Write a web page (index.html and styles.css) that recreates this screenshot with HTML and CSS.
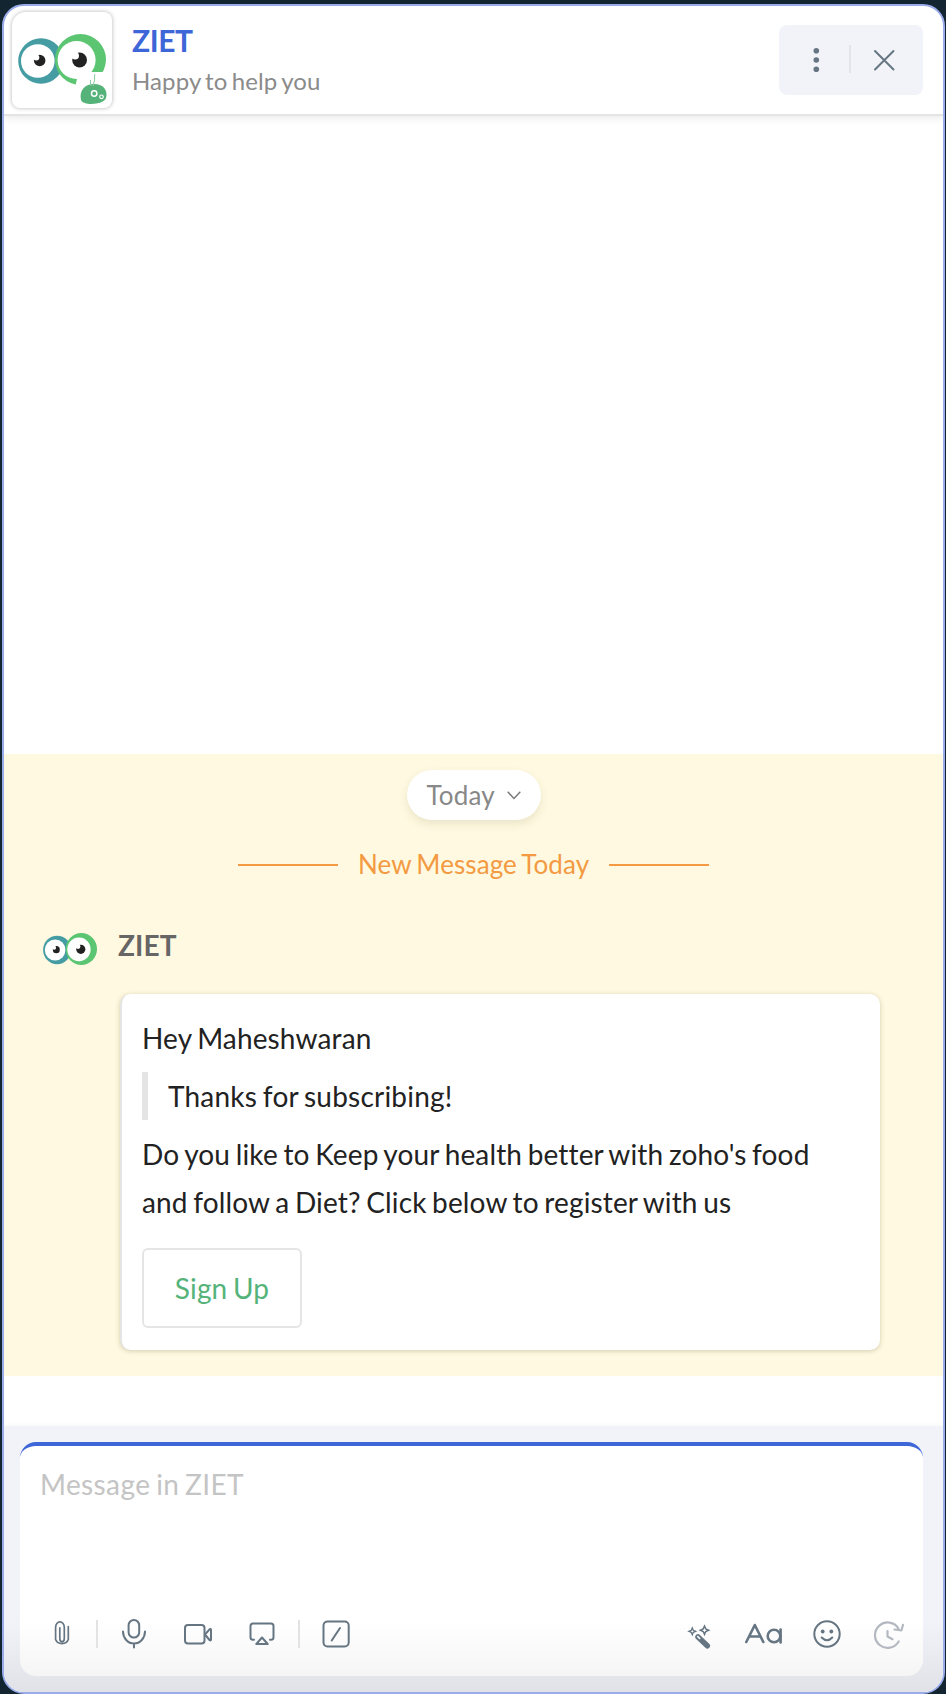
FILE: index.html
```html
<!DOCTYPE html>
<html lang="en">
<head>
<meta charset="utf-8">
<title>ZIET</title>
<link rel="stylesheet" href="styles.css">
</head>
<body>
<svg class="defs" width="0" height="0" aria-hidden="true">
  <symbol id="eyes" viewBox="0 0 88 51">
    <circle cx="23" cy="27" r="22.8" fill="#459da3"/>
    <circle cx="19.8" cy="27" r="16.8" fill="#fff"/>
    <circle cx="21.7" cy="26.5" r="5.7" fill="#222"/>
    <circle cx="18.3" cy="23.5" r="3" fill="#fff"/>
    <circle cx="62.5" cy="25.5" r="25.5" fill="#5cc572"/>
    <circle cx="58.6" cy="26" r="19" fill="#fff"/>
    <circle cx="61.6" cy="26" r="7.4" fill="#222"/>
    <circle cx="57.2" cy="21.7" r="3.8" fill="#fff"/>
  </symbol>
</svg>
<main class="chat">
  <header class="header">
    <div class="avatar">
      <svg width="100" height="96" viewBox="1 0 100 96">
        <use href="#eyes" x="7" y="22" width="88" height="51"/>
        <path d="M80 60H101V84H62L66 67Z" fill="#fff"/>
        <path d="M70 88c-2-9 3-16 13-16s14 7 12 14c-2 7-23 8-25 2Z" fill="#55b37a"/>
        <path d="M80 74q-.8-3-.5-6M82.200 74q2-6 1.500-12" fill="none" stroke="#8bcda2" stroke-width="1"/>
        <circle cx="83.200" cy="81.500" r="2.700" fill="none" stroke="#fff" stroke-width="1.500"/>
        <circle cx="90.500" cy="84.800" r="1.800" fill="none" stroke="#fff" stroke-width="1.200"/>
      </svg>
    </div>
    <div class="identity">
      <h1 class="title">ZIET</h1>
      <p class="subtitle">Happy to help you</p>
    </div>
    <div class="actions">
      <svg width="144" height="70" viewBox="0 0 144 70">
        <g fill="#657582"><circle cx="37.300" cy="25.700" r="2.800"/><circle cx="37.300" cy="35" r="2.800"/><circle cx="37.300" cy="44.300" r="2.800"/></g>
        <path d="M71 20V48" stroke="#e3e4e7" stroke-width="2"/>
        <path d="M96 26L114.500 44.500M114.500 26L96 44.500" stroke="#657582" stroke-width="2" stroke-linecap="round"/>
      </svg>
    </div>
  </header>
  <div class="history"></div>
  <section class="fresh">
    <button class="day">Today<svg width="14" height="9" viewBox="0 0 14 9"><path d="M.7 .8L7 7.500 13.300 .8" fill="none" stroke="#777" stroke-width="1.400"/></svg></button>
    <div class="divider"><span class="rule"></span><span class="divider-text">New Message Today</span><span class="rule"></span></div>
    <div class="sender"><svg width="54" height="32" viewBox="0 0 88 51" preserveAspectRatio="none"><use href="#eyes" width="88" height="51"/></svg><span class="sender-name">ZIET</span></div>
    <article class="card">
      <p class="line">Hey Maheshwaran</p>
      <blockquote class="quote">Thanks for subscribing!</blockquote>
      <p class="line">Do you like to Keep your health better with zoho's food<br>and follow a Diet? Click below to register with us</p>
      <button class="signup">Sign Up</button>
    </article>
  </section>
  <footer class="composer">
    <div class="box">
      <div class="placeholder">Message in ZIET</div>
      <div class="tools">
        <svg class="icon" width="300" height="34" viewBox="50 1617 300 34">
          <g fill="none" stroke="#657582" stroke-width="2" stroke-linecap="round" stroke-linejoin="round">
            <path d="M68.300 1626.500V1639.500a6.700 6 0 0 1-12.700 0V1627.500a4.300 5.500 0 0 1 8.700 0V1638.500a2.200 3 0 0 1-4.500 0V1627.800" stroke-width="1.700"/>
            <rect x="128.600" y="1620" width="10.600" height="17.500" rx="5.300"/>
            <path d="M123 1631.500a11 12 0 0 0 22 0M134 1643.500v4"/>
            <rect x="185" y="1625" width="19.500" height="18.500" rx="3"/>
            <path d="M205 1634.500l4.500-5.200q1.500-1 1.500.7v9.500q0 1.500-1.500.5Z"/>
            <path d="M254 1639.800h-1a2.500 2.500 0 0 1-2.500-2.500V1626a2.500 2.500 0 0 1 2.500-2.500h18a2.500 2.500 0 0 1 2.500 2.500v11.300a2.500 2.500 0 0 1-2.500 2.500h-1M262 1637.500l-5.700 6.500h11.400Z"/>
            <rect x="323.500" y="1621.500" width="25.200" height="25" rx="4"/>
            <path d="M340 1628l-8.300 12.500"/>
          </g>
          <path d="M97 1620v28M299 1620v28" stroke="#e3e3e4" stroke-width="2"/>
        </svg>
        <svg class="icon" width="220" height="34" viewBox="686 1617 220 34">
          <g fill="#657582">
            <path d="M704.500 1626l1.300 2.900 2.900 1.300-2.900 1.300-1.300 2.900-1.300-2.900-2.900-1.300 2.900-1.300Z" fill="none" stroke="#657582" stroke-width="1.500"/>
            <path d="M692.300 1627.900l1 2.400 2.400 1-2.400 1-1 2.400-1-2.400-2.400-1 2.400-1Z" fill="none" stroke="#657582" stroke-width="1.300"/>
            <path d="M698 1637L707.300 1645.800" stroke="#657582" stroke-width="5.500" stroke-linecap="round"/>
            <path d="M697.700 1636.500L699.700 1638.500" stroke="#fff" stroke-width="1.600" stroke-linecap="round"/>
            <circle cx="822.700" cy="1631.500" r="1.900"/><circle cx="831.300" cy="1631.500" r="1.900"/>
          </g>
          <g fill="none" stroke="#657582" stroke-width="2.400" stroke-linecap="round" stroke-linejoin="round">
            <path d="M746.300 1642l8.500-17 8.500 17M750 1636.500h9.800" stroke-width="2.600"/>
            <circle cx="774" cy="1636" r="6.300" stroke-width="2.600"/><path d="M780.600 1629.500v13" stroke-width="2.600"/>
            <circle cx="827" cy="1634" r="12.700" stroke-width="2"/>
            <path d="M821.700 1637.500q5.300 5.500 10.600 0" stroke-width="2"/>
          </g>
          <path d="M898.500 1628.500a12.700 12.700 0 1 0 .200 13M894.500 1629.500l7 .8 1.500-5.500M887.500 1631v5.500l5 2.700" fill="none" stroke="#b4b9c1" stroke-width="2.200" stroke-linecap="round" stroke-linejoin="round"/>
        </svg>
      </div>
    </div>
  </footer>
</main>
</body>
</html>
```
FILE: styles.css
```css
* { box-sizing: border-box; }
body { margin: 0; padding: 4px 1px 0 2px; height: 1694px; background: #132530; font-family: Lato, sans-serif; font-variant-ligatures: none; letter-spacing: .14px; word-spacing: -1.7px; overflow: hidden; }
h1, p, blockquote { margin: 0; }
button { font-family: inherit; letter-spacing: inherit; word-spacing: inherit; }
.defs { position: absolute; }
.chat { display: flex; flex-direction: column; width: 943px; height: 1690px; border: 2px solid #9aabea; border-radius: 22px; background: #fff; overflow: hidden; }
.header { display: flex; flex: none; height: 110px; padding: 6px 20px 0 8px; border-bottom: 2px solid #e4e4e4; box-shadow: 0 2px 8px rgba(0, 0, 0, .09); }
.avatar { width: 100px; height: 96px; border-radius: 14px 8px 8px 8px; box-shadow: 0 0 4px rgba(0, 0, 0, .3); }
.identity { flex: 1; padding: 8px 0 0 20px; }
.title { font-size: 30px; font-weight: 700; line-height: 41px; letter-spacing: -.4px; color: #3d66d8; }
.subtitle { font-size: 24px; line-height: 40px; letter-spacing: .1px; word-spacing: -1.9px; color: #8b8b8b; }
.actions { width: 144px; height: 70px; margin-top: 13px; border-radius: 8px; background: #f2f3f8; }
.history { height: 638px; flex: none; }
.fresh { display: flex; flex-direction: column; flex: none; height: 622px; padding-top: 16px; background: #fef9e0; }
.day { display: flex; align-items: center; justify-content: space-between; align-self: center; width: 134px; height: 50px; padding: 0 20px; border: 0; border-radius: 25px; background: #fff; color: #888; font-size: 26px; line-height: 48px; box-shadow: 0 4px 10px rgba(60, 60, 0, .1); }
.divider { display: flex; align-items: center; justify-content: center; gap: 20px; height: 40px; margin-top: 25px; color: #f39a43; font-size: 26px; }
.divider-text { width: 231px; padding-bottom: 2px; text-align: center; white-space: nowrap; letter-spacing: .1px; }
.rule { width: 100px; height: 2px; background: #f39a43; }
.sender { display: flex; align-items: center; gap: 21px; height: 40px; margin: 40px 0 0 39px; }
.sender svg { margin-top: 8px; }
.sender-name { color: #666; font-size: 28px; font-weight: 700; line-height: 40px; }
.card { width: 760px; height: 356px; margin: 29px 0 0 116px; padding: 20px 20px 22px; border-left: 2px solid #e5e5e5; border-radius: 10px; background: #fff; box-shadow: 0 1px 5px rgba(80, 80, 30, .25); color: #222; font-size: 28px; line-height: 48px; }
.line { white-space: nowrap; }
.quote { margin: 10px 0; padding-left: 20px; border-left: 6px solid #e5e5e5; letter-spacing: .22px; }
.signup { display: block; width: 160px; height: 80px; margin-top: 22px; border: 2px solid #e5e5e5; border-radius: 6px; background: #fff; color: #55b37a; font-size: 28px; }
.composer { flex: 1; margin-top: 50px; padding: 16px; background: linear-gradient(#f2f3f8 74%, #e1e2e7); box-shadow: 0 -1px 4px rgba(0, 0, 0, .04); }
.box { display: flex; flex-direction: column; justify-content: space-between; width: 903px; height: 234px; padding: 14px 20px 25px; border-top: 4px solid #3d66d8; border-radius: 16px; background: linear-gradient(#fff 76%, #f5f5f5); }
.placeholder { color: #c4c4c4; font-size: 28px; line-height: 48px; letter-spacing: .38px; }
.tools { display: flex; justify-content: space-between; width: 856px; margin-left: 10px; }
.icon { flex: none; overflow: visible; }
```
